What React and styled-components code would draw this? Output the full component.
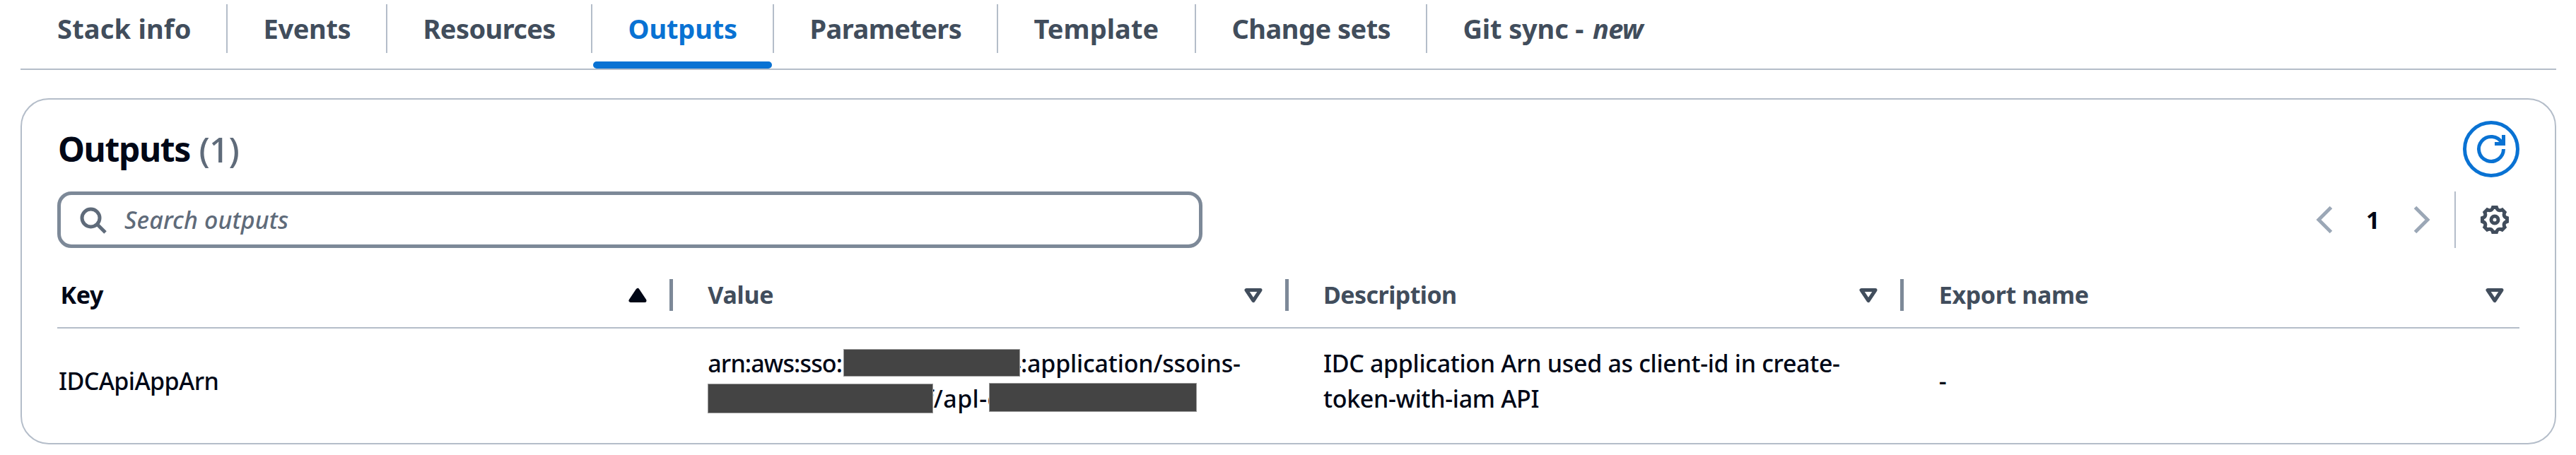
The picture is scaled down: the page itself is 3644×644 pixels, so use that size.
import React from "react";
import styled, { createGlobalStyle, css } from "styled-components";

const color = {
  ink: "#000716",
  heading: "#414d5c",
  muted: "#5f6b7a",
  control: "#7d8998",
  disabled: "#9ba7b6",
  line: "#b4bdc9",
  accent: "#0972d3",
};

const GlobalStyle = createGlobalStyle`
  *, *::before, *::after { box-sizing: border-box; }
  body {
    margin: 0;
    background: #fff;
    color: ${color.ink};
    font-family: "Noto Sans", "Open Sans", sans-serif;
    font-size: 34px;
    line-height: 50px;
  }
`;

const Page = styled.main`
  width: 3644px;
  height: 644px;
  padding: 0 28px 0 29px;
  overflow: hidden;
`;

const TabList = styled.nav`
  display: flex;
  height: 99px;
  padding-top: 6px;
  border-bottom: 2px solid ${color.line};
`;

const Tab = styled.div`
  position: relative;
  flex: none;
  width: ${(p) => p.$width}px;
  color: ${(p) => (p.$active ? color.accent : color.heading)};
  ${(p) =>
    p.$active &&
    css`
      &::after {
        content: "";
        position: absolute;
        left: 1px;
        right: 3px;
        bottom: 0;
        height: 10px;
        border-radius: 5px;
        background: ${color.accent};
      }
    `}
`;

const TabLabel = styled.div`
  display: flex;
  align-items: center;
  height: 69px;
  padding-left: ${(p) => (p.$first ? 52 : 50.5)}px;
  padding-bottom: 1px;
  border-right: ${(p) => (p.$last ? "none" : `2px solid ${color.line}`)};
  font-size: 38px;
  font-weight: 700;
  letter-spacing: ${(p) => p.$tracking}px;
  white-space: pre;
`;

const NewTag = styled.em`
  padding-left: 3px;
  letter-spacing: -0.8px;
`;

const Card = styled.section`
  height: 490px;
  margin-top: 40px;
  padding: 30px 50px 0;
  border: 2px solid ${color.line};
  border-radius: 40px;
`;

const CardHeader = styled.header`
  display: flex;
  align-items: center;
  justify-content: space-between;
  height: 80px;
`;

const Title = styled.h2`
  display: flex;
  margin: 0;
  padding-left: 1px;
  font-size: 48px;
  font-weight: 700;
  line-height: 60px;
  letter-spacing: -1.35px;
`;

const TitleText = styled.span`
  width: 199.5px;
`;

const Counter = styled.span`
  color: ${color.muted};
  font-size: 49px;
  font-weight: 500;
  letter-spacing: -0.7px;
`;

const RefreshButton = styled.button`
  display: grid;
  place-items: center;
  width: 80px;
  height: 80px;
  padding: 0;
  border: 5px solid ${color.accent};
  border-radius: 50%;
  background: #fff;
  color: ${color.accent};
`;

const Toolbar = styled.div`
  display: flex;
  justify-content: space-between;
  height: 80px;
  margin-top: 20px;
`;

const SearchBox = styled.div`
  display: flex;
  align-items: center;
  gap: 25px;
  width: 1620px;
  padding-left: 25px;
  border: 5px solid ${color.control};
  border-radius: 20px;
  color: ${color.muted};
`;

const Placeholder = styled.span`
  font-style: italic;
  font-weight: 500;
  letter-spacing: 0.13px;
`;

const Controls = styled.div`
  display: flex;
  align-items: center;
  padding-right: 15px;
  color: ${color.heading};
`;

const PageArrow = styled.span`
  display: flex;
  color: ${color.disabled};
`;

const PageNumber = styled.span`
  width: 94.5px;
  color: ${color.ink};
  font-weight: 700;
  text-align: center;
`;

const Divider = styled.span`
  width: 2px;
  height: 80px;
  margin: 0 35px 0 28px;
  background: ${color.line};
`;

const Icon = styled.svg.attrs({ viewBox: "0 0 16 16", fill: "none" })`
  display: block;
  flex: none;
  width: 40px;
  height: 40px;
  stroke: currentColor;
  stroke-width: 2;
  overflow: visible;
`;

const Row = styled.div`
  display: grid;
  grid-template-columns: repeat(4, 870.75px);
`;

const HeaderRow = styled(Row)`
  height: 114px;
  padding-top: 21px;
  border-bottom: 2px solid ${color.line};
`;

const HeaderCell = styled.div`
  display: flex;
  align-items: center;
  justify-content: space-between;
  padding-left: ${(p) => (p.$first ? 4.5 : 49.5)}px;
  padding-right: ${(p) => (p.$last ? 15 : 0)}px;
  color: ${(p) => (p.$sorted ? color.ink : color.heading)};
  font-weight: 700;
  letter-spacing: ${(p) => p.$tracking}px;
`;

const HeaderText = styled.span`
  padding-bottom: 1px;
`;

const SortArea = styled.span`
  display: flex;
  align-items: center;
  gap: 25px;
`;

const ColumnHandle = styled.span`
  width: 5px;
  height: 45px;
  background: ${color.control};
`;

const BodyRow = styled(Row)`
  align-items: center;
  height: 148px;
`;

const Cell = styled.div`
  padding-left: ${(p) => (p.$first ? 2 : 49.5)}px;
  font-weight: 500;
  letter-spacing: ${(p) => p.$tracking ?? 0}px;
  white-space: pre;
`;

const ValueLine = styled.div`
  display: flex;
  height: 50px;
`;

const Fragment = styled.span`
  flex: none;
  width: ${(p) => (p.$width ? `${p.$width}px` : "auto")};
  margin-left: ${(p) => p.$shift ?? 0}px;
  letter-spacing: ${(p) => p.$tracking}px;
`;

const Redaction = styled.span`
  position: relative;
  z-index: 1;
  flex: none;
  width: ${(p) => p.$width}px;
  height: ${(p) => p.$height}px;
  margin-top: ${(p) => p.$drop}px;
  border: 1px solid #999;
  background: #444;
`;

const tabs = [
  { label: "Stack info", width: 293, tracking: 0.19 },
  { label: "Events", width: 226, tracking: -0.35 },
  { label: "Resources", width: 290, tracking: -0.6 },
  { label: "Outputs", width: 257, tracking: -0.15, active: true },
  { label: "Parameters", width: 317, tracking: -0.55 },
  { label: "Template", width: 280, tracking: 0.05 },
  { label: "Change sets", width: 327, tracking: -0.53 },
  { label: "Git sync - ", tag: "new", width: 420, tracking: -0.15 },
];

const columns = [
  { label: "Key", tracking: -0.3, sorted: true },
  { label: "Value", tracking: -0.25 },
  { label: "Description", tracking: -0.57 },
  { label: "Export name", tracking: -0.38 },
];

// Eight equal teeth around the centre, joined by rounded valleys.
function gearPath() {
  const turn = ([x, y], k) => {
    const a = (k * Math.PI) / 4;
    const rx = 8 + x * Math.cos(a) - y * Math.sin(a);
    const ry = 8 + x * Math.sin(a) + y * Math.cos(a);
    return `${rx.toFixed(2)} ${ry.toFixed(2)}`;
  };
  let d = `M${turn([-1, -7], 0)}`;
  for (let k = 0; k < 8; k += 1) {
    d += `L${turn([1, -7], k)}Q${turn([1.84, -4.43], k)} ${turn([-1, -7], k + 1)}`;
  }
  return `${d}Z`;
}

const SearchIcon = () => (
  <Icon>
    <circle cx="7" cy="7" r="5" />
    <path d="m15.2 15.2-4.6-4.6" />
  </Icon>
);

const RefreshIcon = () => (
  <Icon>
    <path d="M10 5h5V0" />
    <path d="M15 8a7 7 0 1 1-.9-3.45" />
  </Icon>
);

const GearIcon = () => (
  <Icon>
    <path d={gearPath()} />
    <circle cx="8" cy="8" r="2" />
  </Icon>
);

const SortIcon = ({ sorted }) => (
  <Icon strokeLinejoin="round">
    {sorted ? <path d="M4 11h8L8 5z" fill="currentColor" /> : <path d="M4 5h8l-4 6z" />}
  </Icon>
);

export default function App() {
  return (
    <>
      <GlobalStyle />
      <Page>
        <TabList>
          {tabs.map((tab, i) => (
            <Tab key={tab.label} $width={tab.width} $active={tab.active}>
              <TabLabel $first={i === 0} $last={i === tabs.length - 1} $tracking={tab.tracking}>
                {tab.label}
                {tab.tag && <NewTag>{tab.tag}</NewTag>}
              </TabLabel>
            </Tab>
          ))}
        </TabList>
        <Card>
          <CardHeader>
            <Title>
              <TitleText>Outputs</TitleText>
              <Counter>(1)</Counter>
            </Title>
            <RefreshButton aria-label="Refresh">
              <RefreshIcon />
            </RefreshButton>
          </CardHeader>
          <Toolbar>
            <SearchBox>
              <SearchIcon />
              <Placeholder>Search outputs</Placeholder>
            </SearchBox>
            <Controls>
              <PageArrow>
                <Icon><path d="M11 1 4 8l7 7" /></Icon>
              </PageArrow>
              <PageNumber>1</PageNumber>
              <PageArrow>
                <Icon><path d="m5 1 7 7-7 7" /></Icon>
              </PageArrow>
              <Divider />
              <GearIcon />
            </Controls>
          </Toolbar>
          <HeaderRow>
            {columns.map((col, i) => (
              <HeaderCell
                key={col.label}
                $first={i === 0}
                $last={i === columns.length - 1}
                $sorted={col.sorted}
                $tracking={col.tracking}
              >
                <HeaderText>{col.label}</HeaderText>
                <SortArea>
                  <SortIcon sorted={col.sorted} />
                  {i < columns.length - 1 && <ColumnHandle />}
                </SortArea>
              </HeaderCell>
            ))}
          </HeaderRow>
          <BodyRow>
            <Cell $first $tracking={-0.6}>IDCApiAppArn</Cell>
            <Cell>
              <ValueLine>
                <Fragment $width={192} $tracking={-0.85}>arn:aws:sso::</Fragment>
                <Redaction $width={249.5} $height={39} $drop={5} />
                <Fragment $shift={-18} $tracking={-0.19}>4:application/ssoins-</Fragment>
              </ValueLine>
              <ValueLine>
                <Redaction $width={319} $height={42} $drop={4} />
                <Fragment $width={91} $shift={-12} $tracking={0.4}>f/apl-c</Fragment>
                <Redaction $width={293.5} $height={41} $drop={3} />
              </ValueLine>
            </Cell>
            <Cell $tracking={-0.33}>
              IDC application Arn used as client-id in create-
              <br />
              token-with-iam API
            </Cell>
            <Cell>-</Cell>
          </BodyRow>
        </Card>
      </Page>
    </>
  );
}
